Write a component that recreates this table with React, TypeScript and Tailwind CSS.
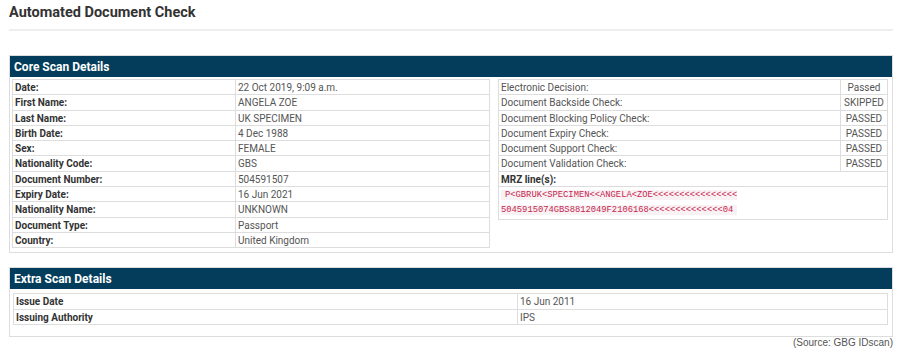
import React from "react";

const core: [string, string][] = [
  ["Date:", "22 Oct 2019, 9:09 a.m."],
  ["First Name:", "ANGELA ZOE"],
  ["Last Name:", "UK SPECIMEN"],
  ["Birth Date:", "4 Dec 1988"],
  ["Sex:", "FEMALE"],
  ["Nationality Code:", "GBS"],
  ["Document Number:", "504591507"],
  ["Expiry Date:", "16 Jun 2021"],
  ["Nationality Name:", "UNKNOWN"],
  ["Document Type:", "Passport"],
  ["Country:", "United Kingdom"],
];

const checks: [string, string][] = [
  ["Electronic Decision:", "Passed"],
  ["Document Backside Check:", "SKIPPED"],
  ["Document Blocking Policy Check:", "PASSED"],
  ["Document Expiry Check:", "PASSED"],
  ["Document Support Check:", "PASSED"],
  ["Document Validation Check:", "PASSED"],
];

const extra: [string, string][] = [
  ["Issue Date", "16 Jun 2011"],
  ["Issuing Authority", "IPS"],
];

const cell = "border border-[#dddddd] px-[2px] pt-[1px] pb-0 leading-[13.3px] align-top";

function PanelHeader({ title }: { title: string }) {
  return (
    <div className="h-[21px] bg-[#033d5b] pl-[4px] text-[12px] font-bold leading-[22px] text-white">
      {title}
    </div>
  );
}

export default function App() {
  return (
    <div
      className="w-[903px] h-[351px] bg-white text-[10px] text-[#555555]"
      style={{ fontFamily: "Roboto, 'Liberation Sans', sans-serif" }}
    >
      <div className="px-[9px] pt-[3px]">
        <h1 className="text-[14.5px] font-bold leading-[20px] text-[#333333]">Automated Document Check</h1>
        <div className="mt-[6px] h-[2px] w-[884px] bg-[#eeeeee]" />

        {/* core scan panel */}
        <div className="mt-[24px] w-[884px] border border-[#dddddd]">
          <PanelHeader title="Core Scan Details" />
          <div className="flex gap-[8px] pl-[2px] pt-[2px] pb-[4px]">
            <table className="w-[478px] table-fixed border-collapse">
              <colgroup>
                <col className="w-[223px]" />
                <col />
              </colgroup>
              <tbody>
                {core.map(([k, v]) => (
                  <tr key={k}>
                    <td className={`${cell} font-bold text-[#333333]`}>{k}</td>
                    <td className={cell}>{v}</td>
                  </tr>
                ))}
              </tbody>
            </table>
            <table className="w-[390px] border-collapse self-start">
              <tbody>
                {checks.map(([k, v]) => (
                  <tr key={k}>
                    <td className={cell}>{k}</td>
                    <td className={`${cell} w-[47px] text-center`}>{v}</td>
                  </tr>
                ))}
                <tr>
                  <td colSpan={2} className={`${cell} font-bold text-[#333333]`}>
                    MRZ line(s):
                  </td>
                </tr>
                <tr>
                  <td colSpan={2} className="border border-[#dddddd] px-[2px] pt-0 pb-[1px] leading-[14.3px] align-top">
                    <code
                      className="bg-[#f9f2f4] px-[4px] text-[8.8px] leading-[14.3px] text-[#c7254e]"
                      style={{ fontFamily: "'Liberation Mono', monospace" }}
                    >
                      P&lt;GBRUK&lt;SPECIMEN&lt;&lt;ANGELA&lt;ZOE&lt;&lt;&lt;&lt;&lt;&lt;&lt;&lt;&lt;&lt;&lt;&lt;&lt;&lt;&lt;&lt;
                      <br />
                      5045915074GBS8812049F2106168&lt;&lt;&lt;&lt;&lt;&lt;&lt;&lt;&lt;&lt;&lt;&lt;&lt;&lt;04
                    </code>
                  </td>
                </tr>
              </tbody>
            </table>
          </div>
        </div>

        {/* extra scan panel */}
        <div className="mt-[14px] w-[884px] border border-[#dddddd]">
          <PanelHeader title="Extra Scan Details" />
          <div className="pl-[3px] pr-[4px] pt-[4px] pb-[11px]">
            <table className="w-full table-fixed border-collapse">
              <colgroup>
                <col className="w-[504px]" />
                <col />
              </colgroup>
              <tbody>
                {extra.map(([k, v]) => (
                  <tr key={k}>
                    <td className={`${cell} font-bold text-[#333333]`}>{k}</td>
                    <td className={cell}>{v}</td>
                  </tr>
                ))}
              </tbody>
            </table>
          </div>
        </div>

        <div
          className="w-[884px] text-right text-[10px] leading-[12px] text-[#555555]"
          style={{ fontFamily: "'Liberation Sans', Arial, sans-serif" }}
        >
          (Source: GBG IDscan)
        </div>
      </div>
    </div>
  );
}
